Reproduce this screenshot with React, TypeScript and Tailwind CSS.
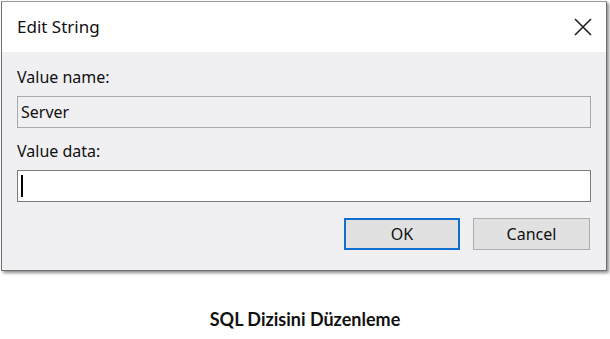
export default function App() {
  return (
    <div className="w-[610px] h-[339px] bg-white flex flex-col" style={{ fontFamily: '"Noto Sans", sans-serif' }}>
      <div className="pl-[1px] pt-[1px]">
        {/* Dialog window */}
        <div className="w-[606px] h-[270px] border border-[#6f6f6f] border-t-[#9a9a9a] flex flex-col shadow-[2px_2px_3px_rgba(0,0,0,0.45)]">
          <div className="h-[50px] bg-white flex items-center justify-between pl-[15px] pr-[14px] shrink-0">
            <span className="text-[17px] text-[#111]">Edit String</span>
            <svg width="18" height="18" viewBox="0 0 18 18" className="text-[#1f1f1f]">
              <path d="M1 1L17 17M17 1L1 17" stroke="currentColor" strokeWidth="1.6" />
            </svg>
          </div>
          <div className="flex-1 bg-[#f0f0f2] px-[15px] pt-[14px] text-[16px] text-[#111]">
            <div className="leading-[22px]">Value name:</div>
            <div className="mt-[8px] h-[32px] border border-[#a9a9ab] bg-[#f0f0f2] flex items-center px-[3px] leading-none">Server</div>
            <div className="mt-[12px] leading-[22px]">Value data:</div>
            <div className="mt-[8px] h-[32px] border border-[#7c7c7e] bg-white flex items-center px-[3px]">
              <div className="w-[2px] h-[22px] bg-black" />
            </div>
            <div className="mt-[16px] flex justify-end gap-[13px] pr-[1px]">
              <button className="w-[116px] h-[32px] border-2 border-[#0f6fd0] bg-[#e1e1e1] text-[16px] text-[#111]">OK</button>
              <button className="w-[117px] h-[32px] border border-[#adadad] bg-[#e1e1e1] text-[16px] text-[#111]">Cancel</button>
            </div>
          </div>
        </div>
      </div>
      <div className="flex-1 flex items-center justify-center pt-[28px]">
        <span className="text-[18px] font-bold text-[#111]" style={{ fontFamily: 'Lato, sans-serif' }}>SQL Dizisini Düzenleme</span>
      </div>
    </div>
  );
}
